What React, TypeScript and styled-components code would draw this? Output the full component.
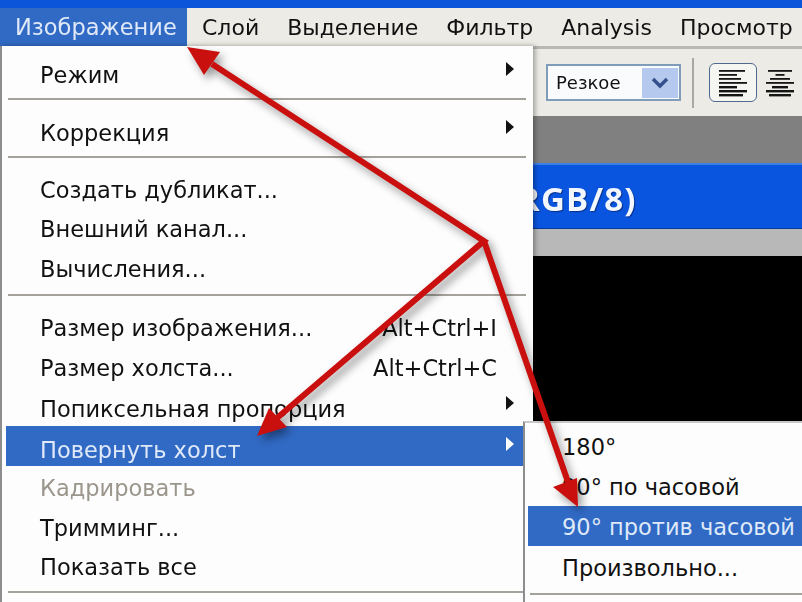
import React from 'react';
import styled, { createGlobalStyle } from 'styled-components';

type EntryType = {
    label: string
    shortcut?: string
    sub?: boolean
    active?: boolean
    disabled?: boolean
    drop?: number
}

type GroupType = {
    tail: number
    gap: number
    entries: EntryType[]
}

const GlobalStyle = createGlobalStyle`
    html, body {
        margin: 0;
        padding: 0;
        background: #ecebe6;
    }
    #root {
        width: 802px;
        height: 602px;
        overflow: hidden;
    }
`

const menuTitles = ['Слой', 'Выделение', 'Фильтр', 'Analysis', 'Просмотр']

const menuGroups: GroupType[] = [
    { tail: 3, gap: 14, entries: [{ label: 'Режим', sub: true }] },
    { tail: 3, gap: 12, entries: [{ label: 'Коррекция', sub: true }] },
    {
        tail: 5,
        gap: 12,
        entries: [{ label: 'Создать дубликат...' }, { label: 'Внешний канал...' }, { label: 'Вычисления...' }],
    },
    {
        tail: 7,
        gap: 0,
        entries: [
            { label: 'Размер изображения...', shortcut: 'Alt+Ctrl+I', drop: 2 },
            { label: 'Размер холста...', shortcut: 'Alt+Ctrl+C', drop: 2 },
            { label: 'Попиксельная пропорция', sub: true, drop: 6 },
            { label: 'Повернуть холст', sub: true, active: true, drop: 8 },
            { label: 'Кадрировать', disabled: true, drop: 6 },
            { label: 'Тримминг...', drop: 6 },
            { label: 'Показать все', drop: 6 },
        ],
    },
]

const rotateEntries: EntryType[] = [
    { label: '180°' },
    { label: '90° по часовой', drop: 1 },
    { label: '90° против часовой', active: true, drop: 2 },
    { label: 'Произвольно...', drop: 5 },
]

const leftLines = [26, 18, 22, 28, 18, 28, 24]
const centerLines = [24, 9, 20, 28, 16, 28, 22]

const Arrows = () => (
    <ArrowLayer viewBox="0 0 802 602">
        <polyline points="212,64 484,241 277,418" fill="none" stroke="#c9100f" strokeWidth="6" />
        <line x1="484" y1="241" x2="568" y2="482" stroke="#c9100f" strokeWidth="6" />
        <polygon points="187,47 220,52 204,75" fill="#c9100f" />
        <polygon points="257,436 287,427 269,408" fill="#c9100f" />
        <polygon points="578,507 553,487 577,478" fill="#c9100f" />
    </ArrowLayer>
)

const AlignIcon = ({ lines, center = false }: { lines: number[]; center?: boolean }) => (
    <svg width="30" height="28" viewBox="0 0 30 28">
        {lines.map((w, i) => (
            <rect key={i} x={center ? (30 - w) / 2 : 1} y={1 + i * 4} width={w} height={i > 3 ? 2.4 : 1.8} fill="#151515" />
        ))}
    </svg>
)

export default function App() {
    return (
        <Page>
            <GlobalStyle />
            <WindowStrip />
            <MenuBar>
                <ActiveTitle>Изображение</ActiveTitle>
                {menuTitles.map((title) => (
                    <MenuTitle key={title}>{title}</MenuTitle>
                ))}
            </MenuBar>
            <Body>
                <Menu>
                    {menuGroups.map((group, g) => (
                        <Group key={g} $tail={group.tail} $gap={group.gap}>
                            {group.entries.map((entry) => (
                                <Row key={entry.label} $active={entry.active} $disabled={entry.disabled} $drop={entry.drop}>
                                    <span>{entry.label}</span>
                                    {entry.shortcut && <Shortcut>{entry.shortcut}</Shortcut>}
                                    {entry.sub && <SubMark $active={entry.active} />}
                                </Row>
                            ))}
                        </Group>
                    ))}
                </Menu>
                <Workspace>
                    <Options>
                        <Select>
                            <SelectText>Резкое</SelectText>
                            <SelectButton>
                                <svg width="20" height="14" viewBox="0 0 20 14">
                                    <path d="M3 3 L10 10 L17 3" fill="none" stroke="#34508c" strokeWidth="3.4" />
                                </svg>
                            </SelectButton>
                        </Select>
                        <OptionsDivider />
                        <AlignButton><AlignIcon lines={leftLines} /></AlignButton>
                        <AlignPlain><AlignIcon lines={centerLines} center /></AlignPlain>
                    </Options>
                    <GrayBand />
                    <TitleBand><TitleText>RGB/8)</TitleText></TitleBand>
                    <RulerBand />
                    <Canvas />
                </Workspace>
            </Body>
            <SubMenu>
                {rotateEntries.map((entry) => (
                    <SubRow key={entry.label} $active={entry.active} $drop={entry.drop}>{entry.label}</SubRow>
                ))}
                <SubDivider />
            </SubMenu>
            <Arrows />
        </Page>
    )
}

const Page = styled.div`
    position: relative;
    width: 802px;
    height: 602px;
    overflow: hidden;
    display: flex;
    flex-direction: column;
    font-family: "DejaVu Sans", sans-serif;
    font-size: 22.5px;
    color: #111;
    filter: blur(0.4px);
`

const WindowStrip = styled.div`
    height: 8px;
    flex: none;
    background: #0a55d9;
`

const MenuBar = styled.div`
    display: flex;
    align-items: center;
    height: 38px;
    flex: none;
    background: #ecebe6;
`

const MenuTitle = styled.div`
    padding: 0 14px;
    font-size: 22px;
    white-space: nowrap;
`

const ActiveTitle = styled(MenuTitle)`
    display: flex;
    align-items: center;
    width: 187px;
    height: 100%;
    box-sizing: border-box;
    margin-right: 1px;
    padding: 0 15px;
    font-size: 22.5px;
    background: #316ac5;
    color: #dfe9f8;
`

const Body = styled.div`
    display: flex;
    flex: 1;
    min-height: 0;
`

const Menu = styled.div`
    position: relative;
    z-index: 1;
    width: 533px;
    flex: none;
    box-sizing: border-box;
    padding: 9px 0 0 4px;
    background: #fdfdfd;
    border-left: 2px solid #8d8d8d;
    box-shadow: 2px 0 5px rgba(0, 0, 0, 0.35);
`

const Group = styled.div<{ $tail: number; $gap: number }>`
    border-bottom: 2px solid #a5a29b;
    margin: 0 7px ${({ $gap }) => $gap}px 2px;
    padding-bottom: ${({ $tail }) => $tail}px;
`

const Row = styled.div<{ $active?: boolean; $disabled?: boolean; $drop?: number }>`
    display: flex;
    align-items: center;
    height: 39.5px;
    box-sizing: border-box;
    padding: ${({ $drop = 0 }) => $drop}px 19px 0 34px;
    margin: 0 -7px 0 -2px;
    white-space: nowrap;
    background: ${({ $active }) => ($active ? '#316ac5' : 'transparent')};
    color: ${({ $active, $disabled }) => ($active ? '#dfe9f8' : $disabled ? '#9b968c' : '#111')};
`

const Shortcut = styled.span`
    margin-left: auto;
    margin-right: 17px;
`

const SubMark = styled.i<{ $active?: boolean }>`
    margin-left: auto;
    margin-bottom: 12px;
    width: 0;
    height: 0;
    border-left: 8px solid ${({ $active }) => ($active ? '#ffffff' : '#111111')};
    border-top: 7px solid transparent;
    border-bottom: 7px solid transparent;
`

const Workspace = styled.div`
    flex: 1;
    min-width: 0;
    display: flex;
    flex-direction: column;
    border-top: 3px solid #b9b8b4;
`

const Options = styled.div`
    display: flex;
    align-items: center;
    height: 67px;
    flex: none;
    padding-left: 13px;
    background: #ecebe6;
`

const Select = styled.div`
    display: flex;
    align-items: center;
    justify-content: space-between;
    width: 135px;
    height: 37px;
    box-sizing: border-box;
    padding: 0 1px 0 8px;
    background: #fafbfd;
    border: 2px solid #7f9db9;
`

const SelectText = styled.span`
    font-size: 18px;
`

const SelectButton = styled.div`
    display: flex;
    align-items: center;
    justify-content: center;
    width: 36px;
    height: 30px;
    background: #b5c9ee;
`

const OptionsDivider = styled.div`
    width: 2px;
    height: 50px;
    margin: 0 15px 0 11px;
    background: #a8a8a4;
`

const AlignButton = styled.div`
    display: flex;
    align-items: center;
    justify-content: center;
    width: 48px;
    height: 39px;
    box-sizing: border-box;
    margin-right: 8px;
    border: 1px solid #4e6a8e;
    border-radius: 6px;
    background: #f5f5f2;
`

const AlignPlain = styled.div`
    display: flex;
    align-items: center;
`

const GrayBand = styled.div`
    height: 47px;
    flex: none;
    background: #808080;
`

const TitleBand = styled.div`
    display: flex;
    align-items: center;
    height: 66px;
    flex: none;
    overflow: hidden;
    background: #0a55e0;
    border-top: 2px solid #3c7fe6;
    border-bottom: 1px solid #063a9c;
    box-sizing: border-box;
`

const TitleText = styled.div`
    margin: 4px 0 0 -15px;
    font-family: "Open Sans", sans-serif;
    font-weight: 700;
    font-size: 33px;
    letter-spacing: 1.2px;
    color: #f2f6fd;
    text-shadow: 1px 1px 1px #06308a;
`

const RulerBand = styled.div`
    height: 27px;
    flex: none;
    background: #b8b8b8;
`

const Canvas = styled.div`
    flex: 1;
    background: #000;
`

const SubMenu = styled.div`
    position: absolute;
    z-index: 2;
    left: 523px;
    top: 421px;
    width: 279px;
    height: 181px;
    box-sizing: border-box;
    padding: 4px 0 0 3px;
    background: #fdfdfd;
    border-left: 2px solid #8d8d8d;
    border-top: 2px solid #c8c8c8;
`

const SubRow = styled.div<{ $active?: boolean; $drop?: number }>`
    display: flex;
    align-items: center;
    height: 39.5px;
    box-sizing: border-box;
    padding: ${({ $drop = 0 }) => $drop}px 0 0 34px;
    white-space: nowrap;
    background: ${({ $active }) => ($active ? '#316ac5' : 'transparent')};
    color: ${({ $active }) => ($active ? '#dfe9f8' : '#111')};
`

const SubDivider = styled.div`
    height: 2px;
    margin: 8px 0 0 2px;
    background: #a5a29b;
`

const ArrowLayer = styled.svg`
    position: absolute;
    z-index: 3;
    left: 0;
    top: 0;
    width: 802px;
    height: 602px;
    pointer-events: none;
    filter: drop-shadow(4px 5px 4px rgba(0, 0, 0, 0.4));
`
